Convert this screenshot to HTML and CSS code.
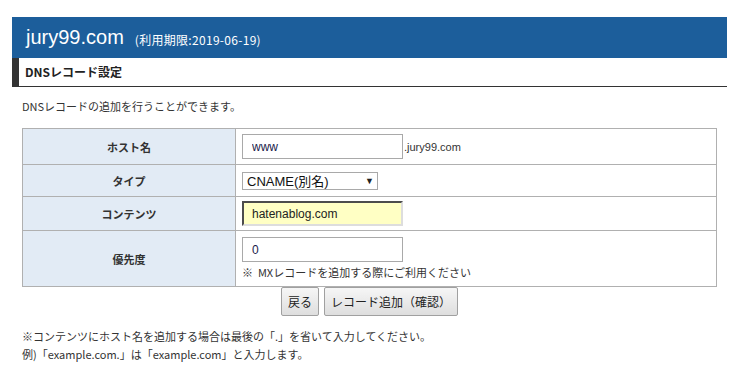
FILE: index.html
```html
<!DOCTYPE html>
<html lang="ja">
<head>
  <meta charset="UTF-8">
  <title>DNSレコード設定</title>
  <link rel="stylesheet" href="styles.css">
</head>
<body>
  <div class="page">
    <!-- ドメイン名ヘッダー -->
    <header class="domain-header">
      <span class="domain-name">jury99.com</span>
      <span class="domain-limit">(利用期限:2019-06-19)</span>
    </header>

    <h2 class="section-title">DNSレコード設定</h2>

    <div class="content">
      <p class="lead">DNSレコードの追加を行うことができます。</p>

      <form class="record-form">
        <table class="record-table">
          <tr class="row-host">
            <th>ホスト名</th>
            <td><input type="text" class="text-input" value="www"><span class="suffix">.jury99.com</span></td>
          </tr>
          <tr class="row-type">
            <th>タイプ</th>
            <td>
              <div class="select-box">
                <span>CNAME(別名)</span>
                <span class="select-arrow">▼</span>
              </div>
            </td>
          </tr>
          <tr class="row-content">
            <th>コンテンツ</th>
            <td><input type="text" class="text-input active" value="hatenablog.com"></td>
          </tr>
          <tr class="row-priority">
            <th>優先度</th>
            <td>
              <input type="text" class="text-input" value="0">
              <p class="hint">※&nbsp;&nbsp;MXレコードを追加する際にご利用ください</p>
            </td>
          </tr>
        </table>

        <div class="buttons">
          <button type="button" class="btn">戻る</button>
          <button type="button" class="btn">レコード追加（確認）</button>
        </div>
      </form>

      <p class="note">※コンテンツにホスト名を追加する場合は最後の「.」を省いて入力してください。<br>例)「example.com.」は「example.com」と入力します。</p>
    </div>
  </div>
</body>
</html>
```

FILE: styles.css
```css
body {
  margin: 0;
  padding: 0;
  background-color: #fff;
  font-family: "Liberation Sans", "Noto Sans CJK JP", sans-serif;
  font-size: 11px;
  color: #333;
}

.page {
  width: 715px;
  margin: 17px 0 0 12px;
}

/* Header */
.domain-header {
  background-color: #1c5e9b;
  height: 41px;
  padding-left: 14px;
  display: flex;
  align-items: center;
  color: #fff;
}

.domain-name {
  font-size: 20px;
  margin-right: 11px;
}

.domain-limit {
  font-size: 12px;
  font-family: "Noto Sans CJK JP", sans-serif;
  letter-spacing: 0.3px;
  padding-top: 3px;
}

.section-title {
  margin: 0;
  height: 28px;
  line-height: 28px;
  padding-left: 6px;
  border-left: 7px solid #333;
  border-bottom: 1px solid #333;
  font-size: 12px;
  font-weight: bold;
  color: #222;
  font-family: "Noto Sans CJK JP", sans-serif;
}

.content {
  padding: 0 10px;
}

.lead {
  margin: 11px 0 14px;
  font-family: "Noto Sans CJK JP", sans-serif;
  line-height: 16px;
}

/* Table */
.record-table {
  width: 100%;
  border-collapse: collapse;
}

.record-table th,
.record-table td {
  border: 1px solid #b0b0b0;
  padding: 0 6px;
}

.record-table th {
  width: 200px;
  background-color: #e2ebf5;
  font-weight: bold;
  font-family: "Noto Sans CJK JP", sans-serif;
  color: #333;
}

.row-host th, .row-host td { height: 35px; }
.row-type th, .row-type td { height: 31px; }
.row-content th, .row-content td { height: 33px; }
.row-priority th, .row-priority td { height: 55px; }

.text-input {
  box-sizing: border-box;
  width: 161px;
  height: 25px;
  border: 1px solid #a9a9a9;
  padding: 0 0 0 9px;
  margin: 0;
  font-family: "Liberation Sans", sans-serif;
  font-size: 12px;
  color: #1a1a4a;
  vertical-align: middle;
}

.text-input.active {
  background-color: #ffffc4;
  border: 2px inset #a0a0a0;
  border-right-color: #ddd;
  border-bottom-color: #ddd;
  padding-left: 8px;
  color: #222;
}

.suffix {
  font-size: 11px;
  vertical-align: middle;
  margin-left: 1px;
  color: #333;
}

.select-box {
  box-sizing: border-box;
  width: 136px;
  height: 18px;
  border: 1px solid #a9a9a9;
  display: flex;
  align-items: center;
  justify-content: space-between;
  padding: 0 3px 0 4px;
  font-size: 13px;
  color: #111;
}

.select-arrow {
  font-size: 9px;
  color: #222;
}

.hint {
  margin: 2px 0 0;
  font-family: "Noto Sans CJK JP", sans-serif;
  font-size: 11px;
}

/* Buttons */
.buttons {
  display: flex;
  justify-content: center;
  gap: 5px;
}

.btn {
  height: 29px;
  padding: 0 6px;
  border: 1px solid #a0a0a0;
  border-radius: 2px;
  background: linear-gradient(#f6f6f6, #dedede);
  font-family: "Noto Sans CJK JP", sans-serif;
  font-size: 12px;
  color: #222;
}

.note {
  margin: 11px 0 0;
  line-height: 18px;
  font-family: "Noto Sans CJK JP", sans-serif;
  font-size: 11px;
}
```
